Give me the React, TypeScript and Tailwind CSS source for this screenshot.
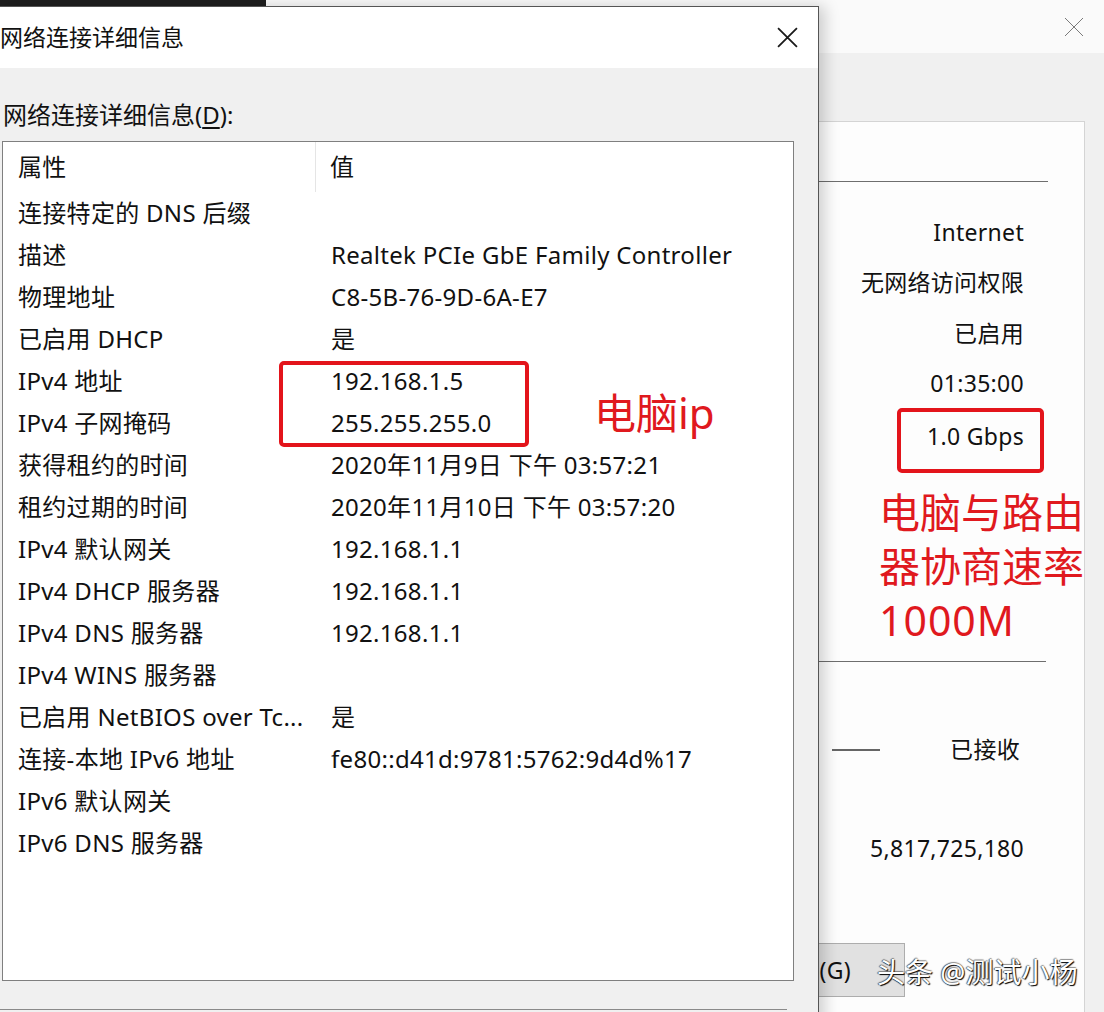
import React from "react";

const rows: [string, string][] = [
  ["连接特定的 DNS 后缀", ""],
  ["描述", "Realtek PCIe GbE Family Controller"],
  ["物理地址", "C8-5B-76-9D-6A-E7"],
  ["已启用 DHCP", "是"],
  ["IPv4 地址", "192.168.1.5"],
  ["IPv4 子网掩码", "255.255.255.0"],
  ["获得租约的时间", "2020年11月9日 下午 03:57:21"],
  ["租约过期的时间", "2020年11月10日 下午 03:57:20"],
  ["IPv4 默认网关", "192.168.1.1"],
  ["IPv4 DHCP 服务器", "192.168.1.1"],
  ["IPv4 DNS 服务器", "192.168.1.1"],
  ["IPv4 WINS 服务器", ""],
  ["已启用 NetBIOS over Tc...", "是"],
  ["连接-本地 IPv6 地址", "fe80::d41d:9781:5762:9d4d%17"],
  ["IPv6 默认网关", ""],
  ["IPv6 DNS 服务器", ""],
];

function CloseIcon({ size, stroke, width }: { size: number; stroke: string; width: number }) {
  return (
    <svg width={size} height={size} viewBox="0 0 20 20">
      <path d="M1 1 L19 19 M19 1 L1 19" stroke={stroke} strokeWidth={width} fill="none" />
    </svg>
  );
}

export default function App() {
  return (
    <div className="relative w-[1104px] h-[1012px] overflow-hidden bg-[#f0f0f0] text-[#111] font-['Noto_Sans','Noto_Sans_CJK_SC',sans-serif]">
      {/* background window */}
      <div className="flex flex-col h-full">
        <div className="h-[53px] bg-[#fafafa] flex items-center justify-end pr-[20px]">
          <CloseIcon size={20} stroke="#7a7a7a" width={1} />
        </div>
        <div className="flex-1 flex justify-end pt-[68px] pr-[19px]">
          <div className="w-[600px] bg-[#fdfdfd] border-t border-r border-[#d4d4d4] flex flex-col text-[23px] tracking-[0.3px]">
            <div className="h-[59px]" />
            <div className="h-px bg-[#6e6e6e] mr-[36px]" />
            <div className="flex flex-col items-end pr-[60px] pt-[25px]">
              <div className="h-[50px] flex items-center">Internet</div>
              <div className="h-[50px] flex items-center">无网络访问权限</div>
              <div className="h-[50px] mt-[1px] flex items-center">已启用</div>
              <div className="h-[50px] flex items-center">01:35:00</div>
              <div className="h-[50px] mt-[3px] flex items-center">1.0 Gbps</div>
            </div>
            <div className="h-[200px]" />
            <div className="h-px bg-[#6e6e6e] mr-[38px]" />
            <div className="h-[88px] flex items-end pl-[347px]">
              <div className="w-[48px] h-[2px] bg-[#666] mb-[-1px]" />
            </div>
            <div className="flex justify-end pr-[64px] -mt-[16px]">
              <span className="leading-[30px]">已接收</span>
            </div>
            <div className="flex justify-end pr-[60px] mt-[69px]">
              <span className="leading-[30px]">5,817,725,180</span>
            </div>
            <div className="flex pl-[234px] mt-[80px]">
              <div className="w-[186px] h-[54px] bg-[#e1e1e1] border border-[#adadad] flex items-center justify-center">
                诊断(G)
              </div>
            </div>
          </div>
        </div>
      </div>

      {/* top dark strip */}
      <div className="absolute left-0 top-0 w-[266px] h-[7px] bg-[#1e1e1e]" />

      {/* dialog window */}
      <div className="absolute left-0 top-[6px] w-[819px] h-[1020px] bg-[#f0f0f0] border-t border-r border-[#555] shadow-[6px_0_14px_rgba(0,0,0,0.18)] flex flex-col">
        <div className="h-[61px] bg-white flex items-center justify-between pr-[20px]">
          <span className="text-[23px]">网络连接详细信息</span>
          <CloseIcon size={21} stroke="#1a1a1a" width={1.7} />
        </div>
        <div className="mt-[32px] h-[30px] flex items-center pl-[3px] text-[24px]">
          网络连接详细信息(<span className="underline underline-offset-[3px]">D</span>):
        </div>
        <div className="mt-[11px] ml-[2px] w-[792px] h-[840px] bg-white border border-[#7f7f7f] flex flex-col text-[24px] tracking-[0.3px]">
          <div className="h-[50px] flex items-center">
            <div className="w-[313px] pl-[15px] h-full flex items-center border-r border-[#e5e5e5]">属性</div>
            <div className="pl-[14px]">值</div>
          </div>
          {rows.map(([k, v]) => (
            <div key={k} className="h-[42px] flex items-center whitespace-nowrap">
              <div className="w-[328px] pl-[15px]">{k}</div>
              <div>{v}</div>
            </div>
          ))}
        </div>
        <div className="mt-[28px] w-[787px] h-px bg-[#8a8a8a]" />
      </div>

      {/* red annotations */}
      <div className="absolute left-[279px] top-[361px] w-[250px] h-[86px] border-[4px] border-[#e3141b] rounded-[5px]" />
      <div className="absolute left-[594px] top-[387px] text-[42px] leading-[52px] text-[#e0191e]">电脑ip</div>
      <div className="absolute left-[897px] top-[408px] w-[147px] h-[65px] border-[4px] border-[#e3141b] rounded-[5px]" />
      <div className="absolute left-[879px] top-[485px] text-[41px] leading-[54px] text-[#e0191e] w-[225px]">
        <div>电脑与路由</div>
        <div>器协商速率</div>
        <div className="tracking-[1px]">1000M</div>
      </div>

      {/* watermark */}
      <div className="absolute left-[877px] top-[954px] text-[28px] leading-[36px] text-white [text-shadow:1px_1px_1px_rgba(0,0,0,1),-1px_0_1px_rgba(0,0,0,0.6),0_-1px_1px_rgba(0,0,0,0.4)]">
        头条 @测试小杨
      </div>
    </div>
  );
}
